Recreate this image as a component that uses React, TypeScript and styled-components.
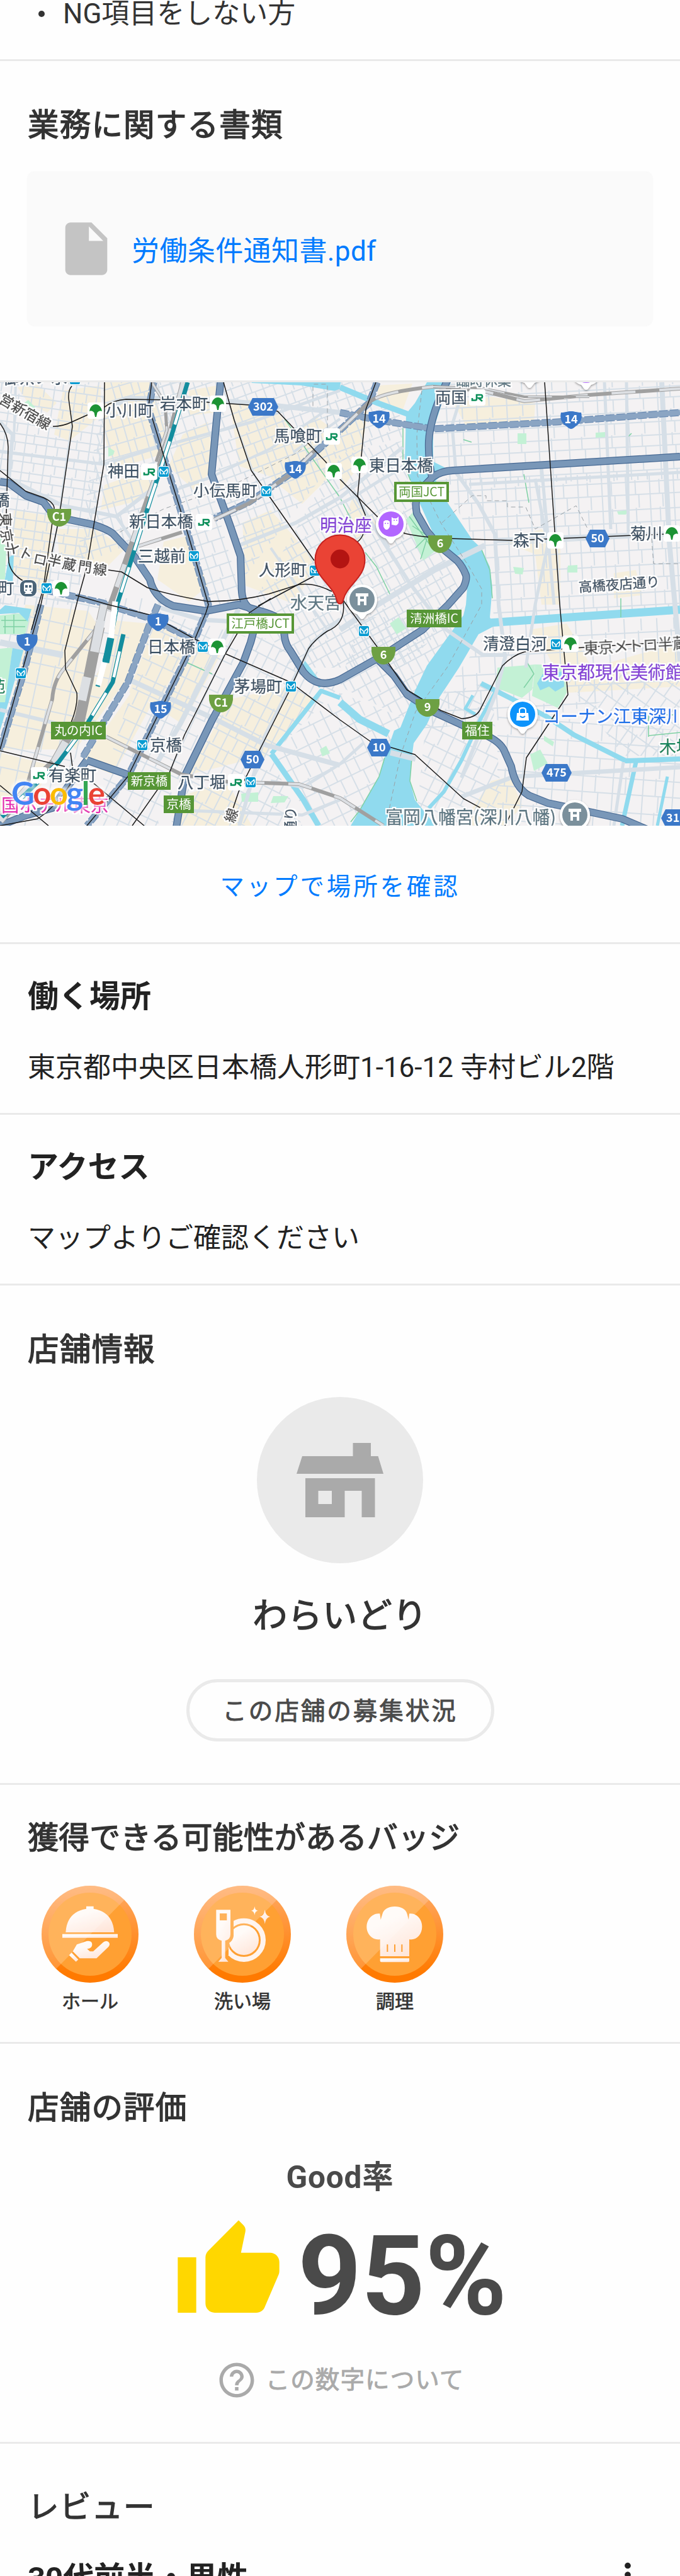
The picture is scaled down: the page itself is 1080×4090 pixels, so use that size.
import type {ReactNode} from 'react';
import styled, {createGlobalStyle} from 'styled-components';
import {MdHelpOutline, MdInsertDriveFile, MdMoreVert, MdThumbUp} from 'react-icons/md';

type Point = [number, number];

interface Grid {
    area: string;
    angle: number;
    w: number;
    h: number;
}

interface MapLabel {
    text: string;
    x: number;
    y: number;
    size?: number;
    color?: string;
    rotate?: number;
}

const navy = '#3a5064';
const purple = '#8640d6';
const slate = '#5c7783';

const grids: Grid[] = [
    {area: '0,607 166,607 166,740 120,960 0,960', angle: 8, w: 17, h: 15},
    {area: '166,607 290,607 250,760 215,860 120,900', angle: -16, w: 15, h: 22},
    {area: '244,607 350,607 340,790 386,960 330,960', angle: -18, w: 17, h: 20},
    {area: '350,607 600,607 655,690 540,720 400,900 386,920 336,753', angle: -20, w: 15, h: 19},
    {area: '540,720 640,700 650,780 700,873 740,960 640,1060 460,1060 400,960', angle: -29, w: 13, h: 20},
    {area: '690,607 1080,607 1080,760 690,770', angle: -3, w: 24, h: 19},
    {area: '700,760 1080,750 1080,975 785,985 775,900', angle: -3, w: 19, h: 22},
    {area: '785,990 1080,980 1080,1080 900,1130 660,1160', angle: -3, w: 26, h: 27},
    {area: '0,950 230,950 150,1150 60,1311 0,1311', angle: 12, w: 28, h: 35},
    {area: '250,970 390,1010 300,1200 250,1311 140,1311', angle: 25, w: 20, h: 25},
    {area: '400,1000 540,1090 430,1200 480,1311 270,1311', angle: 27, w: 17, h: 23},
    {area: '540,1100 640,1140 600,1240 560,1311 500,1311 430,1200', angle: -26, w: 20, h: 25},
    {area: '570,980 730,980 640,1140 540,1090', angle: -28, w: 15, h: 22},
    {area: '680,1110 780,1080 800,1311 660,1311', angle: 26, w: 20, h: 23},
    {area: '790,1130 1080,1160 1080,1311 790,1311', angle: 4, w: 24, h: 27},
    {area: '900,1080 1080,1060 1080,1200 990,1200', angle: 35, w: 20, h: 25},
];

const creamAreas = [
    '28,615 60,611 90,640 75,655 45,640',
    '86,690 100,620 160,612 160,660 110,700',
    '166,607 240,607 265,690 262,720 180,745 168,700',
    '166,770 250,740 240,790 160,810',
    '22,810 85,820 75,950 20,910',
    '90,840 150,840 200,870 170,900 95,890',
    '290,690 330,670 340,740 310,780 268,740',
    '300,620 345,612 340,655 300,660',
    '365,640 420,630 470,690 440,760 380,740',
    '445,715 500,660 540,690 540,740 480,800 430,760',
    '260,860 300,850 330,930 300,955 250,920',
    '385,830 430,810 500,890 470,960 390,930',
    '540,690 585,650 570,740 540,780',
    '600,612 655,609 640,650 600,640',
    '720,640 780,630 850,640 848,674 740,676',
    '800,860 860,840 890,870 890,960 860,960 850,880',
    '840,1000 900,990 940,1060 1080,1020 1080,1090 900,1100 870,1040',
    '40,960 140,970 160,1000 100,1190 0,1190 30,1060',
    '180,985 236,990 200,1080 120,1190 100,1160 160,1060',
    '215,1070 245,990 300,1020 250,1120 205,1100',
    '215,1090 240,1120 180,1230 130,1210',
    '310,1025 350,1040 290,1150 260,1130',
    '365,1110 460,1090 500,1110 420,1200 300,1230',
    '0,1195 80,1215 50,1280 0,1290',
    '270,1270 360,1240 400,1311 280,1311',
    '780,1240 810,1233 830,1280 800,1311 730,1311',
    '975,910 1010,905 1020,945 975,950',
    '560,790 600,830 570,860 545,830',
];

const parks = [
    '0,977 30,974 46,985 40,1007 0,1007',
    '0,1030 20,1028 8,1120 0,1115',
    '645,825 656,813 700,868 672,890',
    '790,1060 850,1055 845,1095 829,1108 788,1092',
    '850,1055 896,1056 900,1100 886,1124 845,1105',
    '822,688 836,688 836,705 822,705',
    '946,687 961,686 961,694 946,695',
    '902,898 917,897 917,909 901,909',
    '815,900 832,902 830,912 818,911',
    '980,812 998,810 994,817 982,817',
    '619,990 633,980 645,998 630,1007',
    '842,1198 858,1190 870,1212 848,1224',
    '864,1168 880,1178 878,1185 864,1176',
    '38,640 45,635 57,648 53,653',
    '172,710 182,716 180,722 172,725',
    '383,1260 410,1258 410,1273 384,1273',
    '434,1264 458,1264 452,1274 430,1275',
    '508,1190 518,1184 524,1196 512,1201',
    '0,850 10,870 8,920 0,920',
];

const parkPaths = [
    'M640 680V733L652 763',
    'M763 868L778 905L782 950',
    'M580 877L598 900L620 945',
    'M838 1053L848 1070L832 1092',
    'M998 693l5-5M736 698l13 4',
    'M650 820l40 55M660 870l25-25M655 835l30 20M668 888l15-48',
    'M2 985h40M5 995h35M8 978v28M22 976v30',
    'M832 753l8 45M1030 1170v-35h40M1030 1168l50-5',
    'M297 1052l40 18M300 1270v15',
    'M611 1203L602 1233L571 1287L557 1305',
    'M654 1205L651 1240L662 1272',
    'M986 950v30',
    'M452 665L540 790L560 830',
];

const canals: {d: string; w: number}[] = [
    {d: 'M540 615L600 640L663 663', w: 9},
    {d: 'M400 600L480 604L540 614', w: 16},
    {d: 'M775 989L1080 968', w: 13},
    {d: 'M764 1085L788 1097L867 1137L912 1167L994 1208L1080 1205', w: 8},
    {d: 'M786 1100L764 1140L733 1207L705 1257L681 1283', w: 6},
    {d: 'M1010 1210L988 1311', w: 7},
    {d: 'M1060 1233L1044 1311', w: 5},
    {d: 'M540 1115L571 1142L617 1165', w: 12},
    {d: 'M540 1108L510 1097L431 1197', w: 7},
    {d: 'M431 1197L482 1270L506 1311', w: 9},
    {d: 'M480 1050L510 1090', w: 8},
    {d: 'M751 1104L739 1125L755 1134', w: 5},
];

const streets: {d: string; w: number}[] = [
    {d: 'M0 717L165 737L241 713L400 670L540 620', w: 5},
    {d: 'M166 655L200 633L290 632L400 640L540 655', w: 8},
    {d: 'M0 670L20 690L14 760L100 803L185 820L250 770', w: 6},
    {d: 'M22 700L25 607', w: 4},
    {d: 'M185 820L215 865L255 960', w: 5},
    {d: 'M250 788L330 760L430 712L520 650', w: 4},
    {d: 'M382 865L470 830L540 790L640 710', w: 6},
    {d: 'M466 718L540 665', w: 4},
    {d: 'M745 769L1080 750', w: 5},
    {d: 'M722 747L760 800L786 848L792 960L802 1040', w: 6},
    {d: 'M735 620L718 675L724 747', w: 5},
    {d: 'M1051 607L1063 860L1080 1050', w: 8},
    {d: 'M960 607L970 840M995 607L998 850', w: 5},
    {d: 'M788 858L1080 847', w: 8},
    {d: 'M600 960L690 905L770 866', w: 9},
    {d: 'M540 1000L600 960', w: 9},
    {d: 'M577 1180L540 1213L481 1250L430 1240', w: 5},
    {d: 'M733 1265L816 1233L1080 1218', w: 7},
    {d: 'M699 993L767 1040L803 1040L788 1100L733 1235', w: 6},
    {d: 'M207 1080L344 1143L423 1183L540 1215', w: 8},
    {d: 'M0 1127L83 1147L170 1170', w: 6},
    {d: 'M0 1020L100 1040', w: 10},
    {d: 'M379 967L286 1150L250 1210', w: 8},
    {d: 'M540 983L496 1020L420 1170L380 1311', w: 6},
    {d: 'M255 965L320 984L430 990', w: 7},
    {d: 'M300 1287L480 1294L540 1270', w: 5},
    {d: 'M560 780L590 830L650 925L700 990', w: 6},
    {d: 'M640 740L560 790L540 800', w: 5},
    {d: 'M850 760L870 865L850 960L835 1060', w: 5},
    {d: 'M990 1210L975 1311M860 740L880 960', w: 5},
    {d: 'M620 1195L660 1205', w: 9},
    {d: 'M540 870L570 955M430 870L520 1000', w: 4},
];

const nationalRoads = [
    'M244 607L236 650L269 753L300 853L331 960L327 973L306 1023L255 1127L203 1233L138 1311',
    'M599 607L586 640L540 683L465 750L396 797L341 823',
    'M540 655L600 667L688 681L884 670L1080 655',
    'M65 960L38 1067L0 1190',
    'M72 937L162 957L241 983L310 1017',
    'M251 960L238 990L203 1083L131 1203',
];

const expressways = [
    'M0 765L14 767L41 787L69 797L86 820L148 833Q170 840 179 847L213 883L238 920Q245 950 275 962L327 970L379 960L413 970Q450 980 451 993Q450 1020 461 1033L482 1067Q505 1095 540 1079L609 1040L671 1000L712 960L736 933Q742 920 740 913Q735 900 726 890L698 867L678 843L662 815Q658 795 665 780L688 757Q700 748 719 747L1080 725',
    'M686 757Q680 730 681 700Q683 670 698 633L712 600',
    'M351 600L344 667L336 753L365 833L382 883L384 940Q386 965 406 970Q407 990 398 1020L386 1053L337 1143L293 1233L279 1320',
    'M600 1047L626 1073L647 1103L688 1130L760 1163Q790 1173 800 1190L812 1217Q818 1250 840 1263L870 1275L988 1300L1035 1320',
    'M138 1207L203 1230M0 1311L40 1295L83 1283L114 1240L138 1207',
];

const railLines = [
    'M114 613Q108 620 109 633L115 677L93 827L65 960L0 1190',
    'M166 607L165 737L138 900L124 950L103 1033L104 1062L122 1100Q124 1120 113 1147',
    'M84 677Q100 677 114 670L165 647Q180 635 200 634L275 635L396 643L441 653L517 733L540 761L599 820L643 847Q670 853 712 855L815 858L1080 847',
    'M355 607L372 667L399 747L427 787L499 890',
    'M0 672Q13 690 13 710L10 817L14 893Q18 912 38 923',
    'M0 747L41 780L69 790Q86 798 86 807L69 933L50 1000',
    'M241 607L236 645L269 753L300 853L331 960L327 973L306 1023L255 1127L203 1233L138 1311',
    'M172 905L193 908L234 933Q270 945 331 955Q380 955 427 943L475 928Q500 925 527 939',
    'M410 962L470 930L500 914',
    'M597 607L581 650L568 787Q575 805 580 817Q582 850 568 860',
    'M865 607L889 960L902 1103L836 1203L829 1257L802 1311',
    'M545 953L599 1027L646 1095L700 1128L733 1141Q755 1140 762 1128L798 1057Q815 1040 833 1035L926 1028L1080 1018',
    'M358 1038L461 1083L540 1143L588 1177L659 1198L736 1268L764 1283',
    'M120 945L172 960L241 977L310 1015L358 1038',
    'M545 955Q550 990 520 1002Q500 1015 490 1030L458 1100L379 1257L368 1290',
    'M430 950L396 973L358 1038L293 1167L269 1227L210 1311',
    'M0 1192L103 1217M112 1195L118 1240',
    'M148 1243L229 1311M0 1247L77 1311',
    'M0 1311L60 1300Q90 1280 115 1240',
];

const jrTracks: {d: string; w: number}[] = [
    {d: 'M291 607L269 693L250 750L220 833L172 970', w: 9},
    {d: 'M241 607L262 640L265 683L248 733', w: 5},
    {d: 'M165 960L148 1037L127 1137L86 1210L45 1250L0 1303', w: 13},
    {d: 'M220 867L289 845M340 825L396 799L465 750L500 715', w: 6},
    {d: 'M169 1170L289 1230L360 1241L475 1245L540 1267L609 1311', w: 6},
    {d: 'M162 987L103 1060Q85 1080 83 1110L45 1240', w: 6},
    {d: 'M540 683L588 637Q610 622 688 614L764 620L833 637L936 627L1080 617', w: 6},
    {d: 'M688 614L764 616L833 630L936 630', w: 4},
];

const shinkansen = [
    'M298 607L272 693L241 787L186 960L176 1013L155 1090',
    'M196 1007L179 1083L138 1150L93 1210L3 1297',
];

const labels: MapLabel[] = [
    {text: '御茶ノ水', x: 5, y: 600},
    {text: '臨時休業', x: 724, y: 604, size: 22, color: slate},
    {text: '岩本町', x: 254, y: 641},
    {text: '小川町', x: 168, y: 652},
    {text: '神田', x: 171, y: 748},
    {text: '馬喰町', x: 435, y: 692},
    {text: '小伝馬町', x: 307, y: 779},
    {text: '新日本橋', x: 205, y: 828},
    {text: '三越前', x: 219, y: 883},
    {text: '人形町', x: 411, y: 905},
    {text: '町', x: -3, y: 934},
    {text: '橋', x: -10, y: 794},
    {text: '水天宮', x: 461, y: 957, size: 27, color: slate},
    {text: '明治座', x: 508, y: 834, size: 27.5, color: purple},
    {text: '東日本橋', x: 586, y: 739},
    {text: '両国', x: 691, y: 631},
    {text: '森下', x: 815, y: 858},
    {text: '菊川', x: 1001, y: 847},
    {text: '高橋夜店通り', x: 919, y: 932, size: 21.5, rotate: -4},
    {text: '日本橋', x: 234, y: 1027},
    {text: '茅場町', x: 372, y: 1090},
    {text: '京橋', x: 238, y: 1183},
    {text: '八丁堀', x: 282, y: 1242},
    {text: '有楽町', x: 77, y: 1231},
    {text: '国ホテル東京', x: 2, y: 1278, size: 28.4, color: '#e52bb3'},
    {text: '苑', x: -17, y: 1090, color: '#12845a'},
    {text: '清澄白河', x: 767, y: 1022},
    {text: '東京メトロ半蔵', x: 927, y: 1029, size: 23.6, color: '#444', rotate: -3},
    {text: '東京都現代美術館', x: 861, y: 1068, size: 28, color: purple},
    {text: 'コーナン江東深川', x: 862, y: 1138, size: 28, color: '#1a73e8'},
    {text: '木場', x: 1047, y: 1186, size: 27, color: '#12845a'},
    {text: '富岡八幡宮(深川八幡)', x: 612, y: 1298, size: 28, color: slate},
    {text: '営新宿線', x: 1, y: 631, size: 22.5, color: '#444', rotate: 30},
    {text: '線', x: 364, y: 1305, size: 22, color: '#444', rotate: -72},
    {text: '通り', x: 461, y: 1325, size: 22, rotate: -90},
];

// letters of the line name that bends along the tunnel
const hanzomon: [string, number, number, number][] = [
    ['東', 9, 825, 88], ['京', 11, 851, 80], ['メ', 20, 870, 38], ['ト', 41, 879, 25], ['ロ', 64, 888, 12],
    ['半', 87, 890, 14], ['蔵', 110, 896, 12], ['門', 135, 900, 8], ['線', 159, 904, 6],
];

const exits: {text: string; x: number; y: number; w: number; outline?: boolean}[] = [
    {text: '両国JCT', x: 626, y: 765, w: 87, outline: true},
    {text: '江戸橋JCT', x: 360, y: 974, w: 107, outline: true},
    {text: '清洲橋IC', x: 646, y: 968, w: 87},
    {text: '丸の内IC', x: 81, y: 1146, w: 87},
    {text: '新京橋', x: 203, y: 1226, w: 68},
    {text: '京橋', x: 260, y: 1263, w: 48},
    {text: '福住', x: 734, y: 1146, w: 48},
];

const hexes: [string, number, number, number][] = [
    ['302', 418, 646, 48], ['50', 949, 855, 38], ['50', 401, 1206, 38],
    ['10', 602, 1187, 38], ['475', 884, 1227, 48], ['319', 1074, 1299, 48],
];
const shields: [string, number, number][] = [
    ['14', 469, 746], ['14', 602, 666], ['14', 907, 667], ['1', 251, 988], ['1', 43, 1020], ['15', 255, 1127],
];
const domes: [string, number, number][] = [
    ['C1', 94, 822], ['6', 699, 864], ['C1', 351, 1117], ['6', 609, 1041], ['9', 679, 1124],
];

const toeiStops: Point[] = [
    [152, 652], [346, 641], [530, 748], [97, 934], [571, 738], [882, 858], [1067, 847], [345, 1027], [906, 1022],
];
const jrStops: Point[] = [[527, 693], [237, 749], [324, 829], [758, 631], [62, 1231], [375, 1242]];
const metroStops: Point[] = [
    [260, 749], [423, 780], [308, 883], [500, 906], [74, 934], [33, 1069], [322, 1027], [462, 1090],
    [226, 1183], [398, 1242], [578, 1002], [883, 1023], [119, 602],
];

function Place({x, y, color, children}: { x: number; y: number; color: string; children?: ReactNode }) {
    return (
        <g transform={`translate(${x} ${y})`}>
            <path d="M0 31C-3 31-5 26-8 23C-19 20-24 9-24 0A24 24 0 0 1 24 0C24 9 19 20 8 23C5 26 3 31 0 31Z"
                  fill="#fff" filter="url(#pinShadow)"/>
            <circle r="20" fill={color}/>
            {children}
        </g>
    );
}

function Torii() {
    return <path d="M-10-10H10V-5H7V9H3V3H-3V9H-7V-5H-10ZM-3-5V-1H3V-5Z" fill="#fff" fillRule="evenodd"/>;
}

function AreaMap() {
    return (
        <MapCanvas viewBox="0 607 1080 704" role="img" aria-label="地図">
            <defs>
                {grids.map((grid, i) => (
                    <pattern key={i} id={`grid${i}`} width={grid.w * 2} height={grid.h * 2}
                             patternUnits="userSpaceOnUse" patternTransform={`rotate(${grid.angle})`}>
                        <path d={`M0 1H${grid.w * 2}M0 ${grid.h + 3}H${grid.w * 2}M2 0V${grid.h * 2}M${grid.w + 3} 0V${grid.h}M${grid.w - 2} ${grid.h}V${grid.h * 2}`}
                              stroke="#d6dfe7" strokeWidth="2" fill="none"/>
                    </pattern>
                ))}
                <filter id="pinShadow" x="-30%" y="-30%" width="160%" height="160%">
                    <feDropShadow dx="0" dy="1.5" stdDeviation="1.5" floodOpacity="0.4"/>
                </filter>
                <filter id="halo" filterUnits="userSpaceOnUse" x="-20" y="587" width="1120" height="744">
                    <feMorphology in="SourceAlpha" operator="dilate" radius="2"/>
                    <feGaussianBlur stdDeviation="0.6" result="spread"/>
                    <feFlood floodColor="#fff"/>
                    <feComposite in2="spread" operator="in" result="edge"/>
                    <feMerge>
                        <feMergeNode in="edge"/>
                        <feMergeNode in="SourceGraphic"/>
                    </feMerge>
                </filter>
                <filter id="logoHalo" filterUnits="userSpaceOnUse" x="0" y="1220" width="200" height="91">
                    <feMorphology in="SourceAlpha" operator="dilate" radius="3"/>
                    <feGaussianBlur stdDeviation="2" result="spread"/>
                    <feFlood floodColor="#fff" floodOpacity="0.65"/>
                    <feComposite in2="spread" operator="in" result="edge"/>
                    <feMerge>
                        <feMergeNode in="edge"/>
                        <feMergeNode in="SourceGraphic"/>
                    </feMerge>
                </filter>
            </defs>
            <rect y="607" width="1080" height="704" fill="#f4f2f3"/>
            <g fill="#f6efdd">{creamAreas.map((area) => <polygon key={area} points={area}/>)}</g>
            {grids.map((grid, i) => <polygon key={grid.area} points={grid.area} fill={`url(#grid${i})`}/>)}
            <g fill="#c3f1d5">{parks.map((park) => <polygon key={park} points={park}/>)}</g>
            <g fill="none" stroke="#90daee" strokeLinejoin="round">
                {canals.map((canal) => <path key={canal.d} d={canal.d} strokeWidth={canal.w}/>)}
            </g>
            <g fill="#90daee">
                <path d="M678 607L659 640L645 657L643 733L652 763L667 800L688 847L712 873L733 900L743 920L740 960L736 977L678 1057L659 1097L636 1155L626 1160L611 1203L602 1233L571 1287L557 1311H692L659 1270L651 1240L654 1203L657 1180L678 1150L698 1107L729 1060L760 1007L785 994L778 980L782 933L778 900L764 870L750 857L712 800L692 763L712 745L688 733V683L702 640L716 607Z"/>
                <path d="M8 961L50 967L44 987L30 973L0 975V968ZM20 1028L38 1030L15 1110L0 1160V1115L8 1115ZM14 885L22 880L20 930L6 930Z"/>
                <path d="M862 1070L895 1066L896 1090L882 1098L872 1090L858 1096L853 1085Z"/>
            </g>
            <g fill="none" stroke="#7fd1a4" strokeWidth="1.5">
                {parkPaths.map((d) => <path key={d} d={d}/>)}
            </g>
            <g fill="none" stroke="#d6dfe7" strokeLinejoin="round">
                {streets.map((street) => <path key={street.d} d={street.d} strokeWidth={street.w}/>)}
            </g>
            <g fill="none" stroke="#9aa1a6" strokeDasharray="7 5" strokeWidth="1">
                <path d="M670 620L662 690L663 755L700 830L745 900L765 935L765 960L710 1060L660 1130L636 1200L617 1290"/>
                <path d="M190 845L260 808L370 770L470 720L520 680V610H497V650"/>
                <path d="M702 830L750 787H772V795H806V805H835L850 840L915 803L935 843M1035 855L1038 895H1080"/>
            </g>
            <g fill="none" strokeLinejoin="round">
                {nationalRoads.map((d) => (
                    <g key={d}>
                        <path d={d} stroke="#6d8db4" strokeWidth="11" strokeDasharray="14 3"/>
                        <path d={d} stroke="#8ba5c3" strokeWidth="8.500"/>
                    </g>
                ))}
                {expressways.map((d) => <path key={d} d={d} stroke="#486a94" strokeWidth="12"/>)}
                {expressways.map((d) => <path key={d} d={d} stroke="#7997b8" strokeWidth="9.500"/>)}
                {jrTracks.map((track) => (
                    <g key={track.d}>
                        <path d={track.d} stroke="#a0a0a0" strokeWidth={track.w}/>
                        <path d={track.d} stroke="#dcdfe3" strokeWidth={track.w - 2} strokeDasharray="38 38"/>
                    </g>
                ))}
                <path d="M158 995L148 1040L140 1080L125 1150" stroke="#a0a0a0" strokeWidth="17"/>
                <path d="M160 985L150 1035M138 1075L130 1112" stroke="#dcdfe3" strokeWidth="14"/>
                {shinkansen.map((d) => (
                    <g key={d}>
                        <path d={d} stroke="#138d9e" strokeWidth="7"/>
                        <path d={d} stroke="#fff" strokeWidth="4.5" strokeDasharray="42 28" strokeDashoffset="-28"/>
                    </g>
                ))}
                <path d="M183 955L176 1015M166 1050L156 1088" stroke="#fff" strokeWidth="9"/>
                <path d="M176 1013L168 1052" stroke="#138d9e" strokeWidth="11"/>
                {railLines.map((d) => <path key={d} d={d} stroke="#1b1b1b" strokeWidth="1.5"/>)}
            </g>

            <g filter="url(#halo)">
                {labels.map((label) => (
                    <MapText key={label.text + label.x} x={label.x} y={label.y} dy="0.37em"
                             fontSize={label.size ?? 25.4} $color={label.color ?? navy}
                             transform={label.rotate ? `rotate(${label.rotate} ${label.x} ${label.y})` : undefined}>
                        {label.text}
                    </MapText>
                ))}
                {hanzomon.map(([char, x, y, angle]) => (
                    <MapText key={char} x={x} y={y} dy="0.37em" fontSize="22" $color="#444" textAnchor="middle"
                             transform={`rotate(${angle} ${x} ${y})`}>
                        {char}
                    </MapText>
                ))}
            </g>

            {exits.map((exit) => (
                <g key={exit.text}>
                    <rect x={exit.x} y={exit.y} width={exit.w} height={exit.outline ? 32 : 28} fill="#579636"/>
                    {exit.outline &&
                        <rect x={exit.x + 4} y={exit.y + 4} width={exit.w - 8} height="24" fill="#fff"/>}
                    <SignText x={exit.x + exit.w / 2} y={exit.y + (exit.outline ? 16 : 14)} dy="0.36em"
                              fill={exit.outline ? '#579636' : '#fff'}>
                        {exit.text}
                    </SignText>
                </g>
            ))}
            {hexes.map(([no, x, y, w]) => (
                <g key={no + x} transform={`translate(${x} ${y})`}>
                    <path d={`M${-w / 2} 0L${-w / 2 + 7}-14H${w / 2 - 7}L${w / 2} 0L${w / 2 - 7} 14H${-w / 2 + 7}Z`}
                          fill="#3b78c8"/>
                    <RouteNo dy="0.35em">{no}</RouteNo>
                </g>
            ))}
            {shields.map(([no, x, y]) => (
                <g key={no + x} transform={`translate(${x} ${y})`}>
                    <path d="M0-14C6-14 9-12 16-12C18-4 16 5 7 10Q3 14 0 14Q-3 14-7 10C-16 5-18-4-16-12C-9-12-6-14 0-14Z"
                          fill="#3b78c8"/>
                    <RouteNo dy="0.3em">{no}</RouteNo>
                </g>
            ))}
            {domes.map(([no, x, y]) => (
                <g key={no + x} transform={`translate(${x} ${y})`}>
                    <path d="M-19-14H19V-6C17 8 8 14 0 14S-17 8-19-6Z" fill="#6da043"/>
                    <RouteNo dy="0.27em">{no}</RouteNo>
                </g>
            ))}

            {toeiStops.map(([x, y]) => (
                <g key={x} transform={`translate(${x} ${y})`}>
                    <rect x="-13" y="-13" width="26" height="26" rx="4" fill="#fff"/>
                    <path d="M-10 1C-9-6-5-10 0-10S9-6 10 1Q6-1 2.500 3L1 10H-1L-2.500 3Q-6-1-10 1Z"
                          fill="#1c9334"/>
                </g>
            ))}
            {jrStops.map(([x, y]) => (
                <g key={x} transform={`translate(${x} ${y})`}>
                    <rect x="-13" y="-13" width="26" height="26" rx="4" fill="#fff"/>
                    <path d="M-8 1V4.500H-3Q-1 4.500-1 2.500V-4H6Q8-4 8-1.500T6 1H2L8 6" fill="none"
                          stroke="#0c8f5a" strokeWidth="2.6"/>
                </g>
            ))}
            {metroStops.map(([x, y]) => (
                <g key={x} transform={`translate(${x} ${y})`}>
                    <rect x="-9" y="-9" width="18" height="18" rx="3" fill="#fff"/>
                    <rect x="-8" y="-8" width="16" height="16" rx="2.5" fill="#0a9cd2"/>
                    <path d="M-4 4Q-7 0-5.500-4L0 1L5.500-4Q7 0 4 4M-2 4L0 2L2 4" fill="none" stroke="#fff"
                          strokeWidth="1.6"/>
                </g>
            ))}
            <g transform="translate(45 934)">
                <rect x="-14" y="-14" width="28" height="28" rx="10" fill="#fff"/>
                <rect x="-13" y="-13" width="26" height="26" rx="9" fill="#4b6478"/>
                <path d="M-7-6Q-7-9-4-9H4Q7-9 7-6V3Q7 6 4 6L6 9H-6L-4 6Q-7 6-7 3ZM-5-5V-1H-1V-5ZM1-5V-1H5V-5ZM-4.500 2V4H-2.500V2ZM2.500 2V4H4.500V2Z"
                      fill="#fff" fillRule="evenodd"/>
            </g>

            <Place x={841} y={585} color="#7b909c"/>
            <Place x={931} y={588} color="#b266ff"/>
            <Place x={621} y={832} color="#b266ff">
                <path d="M-12-4L-9-6H-5L-2-4V4Q-4 9-7 9T-12 4ZM1-11L4-9H9L12-12V-2Q10 3 6 2L1 1V-4Z" fill="#fff"/>
                <path d="M-10-1h2M-6-1h2M4-6h2M8-6h2" stroke="#b266ff" strokeWidth="1.5"/>
            </Place>
            <Place x={575} y={952} color="#7b909c"><Torii/></Place>
            <Place x={913} y={1294} color="#7b909c"><Torii/></Place>
            <Place x={830} y={1134} color="#0d93fb">
                <path d="M-9-2H9L10 10H-10Z" fill="#fff"/>
                <path d="M-5-2V-6Q-5-10 0-10T5-6V-2" fill="none" stroke="#fff" strokeWidth="2"/>
                <path d="M-4 3Q0 7 4 3" fill="none" stroke="#0d93fb" strokeWidth="2"/>
            </Place>

            <path d="M540 849.500C562 849.500 579.500 867 579.500 889C579.500 918 551 928 545 953Q544 958.500 540 958.500Q536 958.500 535 953C529 928 500.500 918 500.500 889C500.500 867 518 849.500 540 849.500Z"
                  fill="#ea4335" stroke="#c5221f" strokeWidth="2"/>
            <circle cx="540" cy="887.500" r="15" fill="#b31412"/>

            <g filter="url(#logoHalo)">
                <Wordmark x="18" y="1278" textLength="149">
                    <tspan fill="#4285f4">G</tspan>
                    <tspan fill="#ea4335">o</tspan>
                    <tspan fill="#fbbc04">o</tspan>
                    <tspan fill="#4285f4">g</tspan>
                    <tspan fill="#34a853">l</tspan>
                    <tspan fill="#ea4335">e</tspan>
                </Wordmark>
            </g>
        </MapCanvas>
    );
}

const HallGlyph = () => (
    <>
        <path d="M213 98H248V110Q340 125 346 222H115Q121 125 213 110Z"/>
        <path d="M99 230H363V248H99Z"/>
        <path d="M168 280L215 264Q242 260 241 282Q238 300 217 301L230 313H246L294 269Q306 260 318 267Q330 277 319 291L262 346H182L149 313Z"/>
        <path d="M143 319L175 352L164 362L131 331Z"/>
    </>
);

const DishGlyph = () => (
    <>
        <mask id="plateMask">
            <rect width="462" height="462" fill="#fff"/>
            <path d="M90 100H189V240Q186 262 165 275V330H90Z" fill="#000"/>
        </mask>
        <g mask="url(#plateMask)">
            <circle cx="238" cy="259" r="92" fill="none" stroke="#fff4ee" strokeWidth="24"/>
            <circle cx="238" cy="259" r="71"/>
        </g>
        <path d="M106 115H174V232Q174 256 149 262V344L164 362H116L132 344V262Q106 256 106 232ZM123 132V165H157V132Z"
              fillRule="evenodd"/>
        <path d="M289 98Q291 117 305 119Q291 121 289 140Q287 121 273 119Q287 117 289 98ZM338 115Q342 144 363 148Q342 152 338 182Q334 152 313 148Q334 144 338 115Z"/>
    </>
);

const CookGlyph = () => (
    <>
        <path d="M161 256C125 260 97 232 97 195S128 128 160 133L164 162L172 135C178 111 203 99 231 99S285 111 290 135L297 162L300 133C333 128 361 158 361 195S336 260 300 256V336H161Z"/>
        <path d="M161 346H300V358Q300 364 294 364H167Q161 364 161 358Z"/>
        <path d="M196 280V315M231 280V315M265 280V315" stroke="#ffa033" strokeWidth="6"/>
    </>
);

const badges = [
    {id: 'hall', label: 'ホール', Glyph: HallGlyph},
    {id: 'dish', label: '洗い場', Glyph: DishGlyph},
    {id: 'cook', label: '調理', Glyph: CookGlyph},
];

function BadgeMedal({id, children}: { id: string; children: ReactNode }) {
    return (
        <Medal viewBox="0 0 462 462">
            <defs>
                <linearGradient id={`${id}Rim`} x1="0" y1="0" x2="0" y2="1">
                    <stop offset="0" stopColor="#ffab66"/>
                    <stop offset="0.9" stopColor="#ff7a00"/>
                </linearGradient>
                <linearGradient id={`${id}Glyph`} x1="0.2" y1="0" x2="0.7" y2="1">
                    <stop offset="0.3" stopColor="#fffaf7"/>
                    <stop offset="1" stopColor="#ffe6da"/>
                </linearGradient>
                <clipPath id={`${id}Clip`}><circle cx="231" cy="231" r="231"/></clipPath>
            </defs>
            <circle cx="231" cy="231" r="231" fill={`url(#${id}Rim)`}/>
            <circle cx="231" cy="231" r="198" fill="#ffa033"/>
            <g fill={`url(#${id}Glyph)`}>{children}</g>
            <path d="M462 0L0 466V0Z" fill="#fff" fillOpacity="0.2" clipPath={`url(#${id}Clip)`}/>
        </Medal>
    );
}

export default function App(): JSX.Element {
    return (
        <Page>
            <GlobalStyle/>
            <NoticeSection>
                <NoticeItem>NG項目をしない方</NoticeItem>
            </NoticeSection>

            <DocumentSection>
                <Heading>業務に関する書類</Heading>
                <DocumentCard href="#">
                    <MdInsertDriveFile size={100} color="#c4c4c4"/>
                    労働条件通知書.pdf
                </DocumentCard>
            </DocumentSection>

            <AreaMap/>
            <MapLink href="#">マップで場所を確認</MapLink>

            <InfoSection>
                <InfoTitle>働く場所</InfoTitle>
                <InfoText>東京都中央区日本橋人形町1-16-12 寺村ビル2階</InfoText>
            </InfoSection>
            <InfoSection>
                <InfoTitle>アクセス</InfoTitle>
                <InfoText>マップよりご確認ください</InfoText>
            </InfoSection>

            <StoreSection>
                <Heading>店舗情報</Heading>
                <StoreAvatar>
                    <svg width="138" height="118" viewBox="0 0 138 118" fill="#aaa">
                        <path d="M9 21H89.500V0H118V21H129.500L138 49H0Z"/>
                        <path d="M14 56H124.500V118H103.500V76H76.500V118H14ZM34.500 76V97H56V76Z" fillRule="evenodd"/>
                    </svg>
                </StoreAvatar>
                <StoreName>わらいどり</StoreName>
                <StoreButton>この店舗の募集状況</StoreButton>
            </StoreSection>

            <BadgeSection>
                <BadgeHeading>獲得できる可能性があるバッジ</BadgeHeading>
                <BadgeList>
                    {badges.map(({id, label, Glyph}) => (
                        <BadgeItem key={id}>
                            <BadgeMedal id={id}><Glyph/></BadgeMedal>
                            <BadgeLabel>{label}</BadgeLabel>
                        </BadgeItem>
                    ))}
                </BadgeList>
            </BadgeSection>

            <RatingSection>
                <Heading>店舗の評価</Heading>
                <RateTitle>Good率</RateTitle>
                <RateRow>
                    <MdThumbUp size={176} color="#ffd700"/>
                    <RateValue>95%</RateValue>
                </RateRow>
                <HelpRow>
                    <MdHelpOutline size={66}/>
                    この数字について
                </HelpRow>
            </RatingSection>

            <ReviewSection>
                <Heading>レビュー</Heading>
                <ReviewHead>
                    <Reviewer>30代前半・男性</Reviewer>
                    <MdMoreVert size={58} color="#222"/>
                </ReviewHead>
            </ReviewSection>
        </Page>
    );
}


const GlobalStyle = createGlobalStyle`
  * {
    box-sizing: border-box;
  }

  body {
    margin: 0;
    background: #fefefe;
    color: #333;
    font-family: Roboto, "Noto Sans CJK JP", sans-serif;
    font-size: 44px;
  }

  svg {
    display: block;
    flex-shrink: 0;
  }
`;

const Page = styled.main`
  width: 1080px;
  height: 4090px;
  overflow: hidden;
`;

const Section = styled.section`
  display: flex;
  flex-direction: column;
  padding: 66px 44px;
  border-bottom: 3px solid #eaeaea;
`;

const NoticeSection = styled(Section)`
  height: 97px;
  padding-top: 0;
  padding-bottom: 0;
`;

const NoticeItem = styled.p`
  display: flex;
  align-items: center;
  gap: 29px;
  margin: -10px 0 0;
  padding-left: 17px;
  line-height: 64px;

  &::before {
    content: '';
    width: 10px;
    height: 10px;
    border-radius: 50%;
    background: #333;
  }
`;

const DocumentSection = styled(Section)`
  height: 510px;
`;

/* the CJK face has no medium weight, a hairline stroke fills it in */
const Heading = styled.h2`
  margin: 0;
  font-size: 49.5px;
  font-weight: 400;
  letter-spacing: 1.2px;
  line-height: 72px;
  -webkit-text-stroke: 1.4px currentColor;
`;

const DocumentCard = styled.a`
  display: flex;
  align-items: center;
  gap: 22px;
  height: 244px;
  margin-top: 38px;
  padding: 0 43px;
  border-radius: 11px;
  background: #fafafa;
  box-shadow: 0 0 3px rgba(0, 0, 0, 0.05);
  color: #007bff;
  letter-spacing: 0.4px;
  text-decoration: none;
`;

const MapCanvas = styled.svg`
  width: 1080px;
  height: 704px;
`;

const MapText = styled.text<{ $color: string }>`
  fill: ${({$color}) => $color};
  stroke: ${({$color}) => $color};
  stroke-width: 0.5px;
  font-family: "Noto Sans CJK JP", sans-serif;
`;

const SignText = styled.text`
  font-family: "Noto Sans CJK JP", sans-serif;
  font-size: 19.5px;
  text-anchor: middle;
`;

const RouteNo = styled.text`
  fill: #fff;
  font-family: "Noto Sans CJK JP", sans-serif;
  font-size: 18px;
  font-weight: 700;
  text-anchor: middle;
`;

const Wordmark = styled.text`
  font-family: Lato, sans-serif;
  font-size: 51px;
  font-weight: 700;
`;

const MapLink = styled.a`
  display: flex;
  align-items: center;
  justify-content: center;
  height: 188px;
  border-bottom: 3px solid #eaeaea;
  color: #007bff;
  font-size: 38.5px;
  letter-spacing: 3.85px;
  text-decoration: none;
`;

const InfoSection = styled(Section)`
  gap: 44px;
  height: 271px;
  padding-top: 48px;
  padding-bottom: 40px;
`;

const InfoTitle = styled.h3`
  margin: 0;
  color: #222;
  font-size: 49px;
  font-weight: 700;
  line-height: 72px;
`;

const InfoText = styled.p`
  margin: 0;
  color: #222;
  line-height: 64px;
  white-space: nowrap;
`;

const StoreSection = styled(Section)`
  height: 793px;
`;

const StoreAvatar = styled.div`
  display: flex;
  align-items: center;
  justify-content: center;
  align-self: center;
  width: 264px;
  height: 264px;
  margin-top: 39px;
  border-radius: 50%;
  background: #eaeaea;
`;

const StoreName = styled.p`
  align-self: center;
  margin: 43px 0 61px;
  font-size: 55px;
  letter-spacing: 0.5px;
  line-height: 80px;
  -webkit-text-stroke: 1.4px currentColor;
`;

const StoreButton = styled.button`
  align-self: center;
  width: 489px;
  height: 99px;
  padding: 0 0 6px;
  border: 5px solid #eaeaea;
  border-radius: 50px;
  background: transparent;
  color: #4a4a4a;
  font-family: inherit;
  font-size: 38.5px;
  letter-spacing: 3px;
  -webkit-text-stroke: 0.9px currentColor;
`;

const BadgeSection = styled(Section)`
  height: 411px;
  padding-top: 49px;
  padding-bottom: 0;
`;

const BadgeHeading = styled(Heading)`
  font-size: 49px;
  letter-spacing: 0.1px;
`;

const BadgeList = styled.div`
  display: flex;
  gap: 88px;
  margin-top: 39px;
  padding-left: 22px;
`;

const BadgeItem = styled.div`
  display: flex;
  flex-direction: column;
  align-items: center;
  gap: 10px;
`;

const Medal = styled.svg`
  width: 154px;
  height: 154px;
`;

const BadgeLabel = styled.span`
  font-size: 30px;
  line-height: 40px;
  -webkit-text-stroke: 0.7px currentColor;
`;

const RatingSection = styled(Section)`
  height: 635px;
`;

const RateTitle = styled.p`
  margin: 42px 0 29px;
  color: #4a4a4a;
  font-size: 49.5px;
  font-weight: 700;
  letter-spacing: 0.8px;
  line-height: 64px;
  text-align: center;
`;

const RateRow = styled.div`
  display: flex;
  align-items: center;
  justify-content: center;
  gap: 22px;
  height: 176px;
`;

const RateValue = styled.strong`
  margin-top: 16px;
  color: #4a4a4a;
  font-size: 176px;
  font-weight: 700;
  line-height: 176px;
`;

const HelpRow = styled.div`
  display: flex;
  align-items: center;
  justify-content: center;
  gap: 13px;
  margin-top: 52px;
  color: #aaa;
  font-size: 38.5px;
  letter-spacing: 1.1px;
  line-height: 66px;
  -webkit-text-stroke: 0.9px currentColor;

  svg {
    -webkit-text-stroke: 0;
  }
`;

const ReviewSection = styled(Section)`
  padding-top: 65px;
`;

const ReviewHead = styled.div`
  display: flex;
  align-items: center;
  justify-content: space-between;
  height: 72px;
  margin-top: 35px;
  padding-right: 10px;
`;

const Reviewer = styled.span`
  color: #222;
  font-size: 49px;
  font-weight: 700;
`;
